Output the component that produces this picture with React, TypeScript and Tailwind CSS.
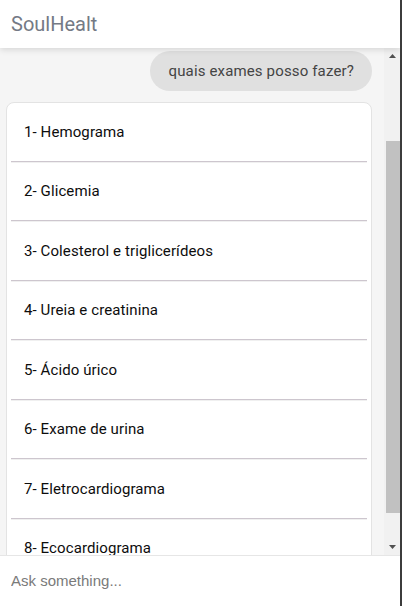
import React from "react";

const items = [
  "1- Hemograma",
  "2- Glicemia",
  "3- Colesterol e triglicerídeos",
  "4- Ureia e creatinina",
  "5- Ácido úrico",
  "6- Exame de urina",
  "7- Eletrocardiograma",
  "8- Ecocardiograma",
];

export default function App() {
  return (
    <div className="h-[606px] w-[402px] flex flex-col overflow-hidden bg-white border-r-2 border-[#3c3c3c] font-['Roboto',sans-serif]">
      <header className="relative z-10 h-[48px] shrink-0 bg-white flex items-center px-[11px] shadow-[0_2px_6px_rgba(0,0,0,0.12)]">
        <span className="text-[20px] text-[#747a85] leading-none">SoulHealt</span>
      </header>
      <div className="flex-1 min-h-0 flex bg-[#f5f5f5]">
        <div className="flex-1 min-w-0 overflow-hidden pl-[6px] pr-[12px] pt-[3px]">
          <div className="flex justify-end">
            <div className="h-[40px] px-[18px] rounded-full bg-[#e0e0e0] flex items-center text-[15px] tracking-[0.15px] text-[#444444]">
              quais exames posso fazer?
            </div>
          </div>
          <div className="mt-[11px] bg-white border border-[#e3e3e3] rounded-[8px]">
            {items.map((t, i) => (
              <div key={i}>
                {i > 0 && (
                  <div className="mx-[4px] border-t border-t-[#cdc6ce] border-b border-b-[#f0f0f0]" />
                )}
                <div className="h-[57.5px] flex items-center pl-[17px] text-[15px] tracking-[0.1px] text-[#0d0d0d]">
                  {t}
                </div>
              </div>
            ))}
          </div>
        </div>
        <div className="w-[16px] shrink-0 bg-[#f1f1f1] flex flex-col">
          <div className="h-[16px] flex items-center justify-center">
            <svg width="7" height="4" viewBox="0 0 7 4">
              <path d="M3.5 0 L7 4 L0 4 Z" fill="#505050" />
            </svg>
          </div>
          <div className="h-[77px]" />
          <div className="h-[372px] ml-[2px] bg-[#c1c1c1]" />
          <div className="flex-1" />
          <div className="h-[16px] flex items-center justify-center">
            <svg width="7" height="4" viewBox="0 0 7 4">
              <path d="M0 0 L7 0 L3.5 4 Z" fill="#505050" />
            </svg>
          </div>
        </div>
      </div>
      <div className="h-[51px] shrink-0 bg-white border-t border-[#e6e6e6] flex items-center px-[11px]">
        <input
          className="w-full outline-none bg-transparent text-[15px] font-['Liberation_Sans',Arial,sans-serif] text-[#333] placeholder:text-[#7a7a7a]"
          placeholder="Ask something..."
        />
      </div>
    </div>
  );
}
